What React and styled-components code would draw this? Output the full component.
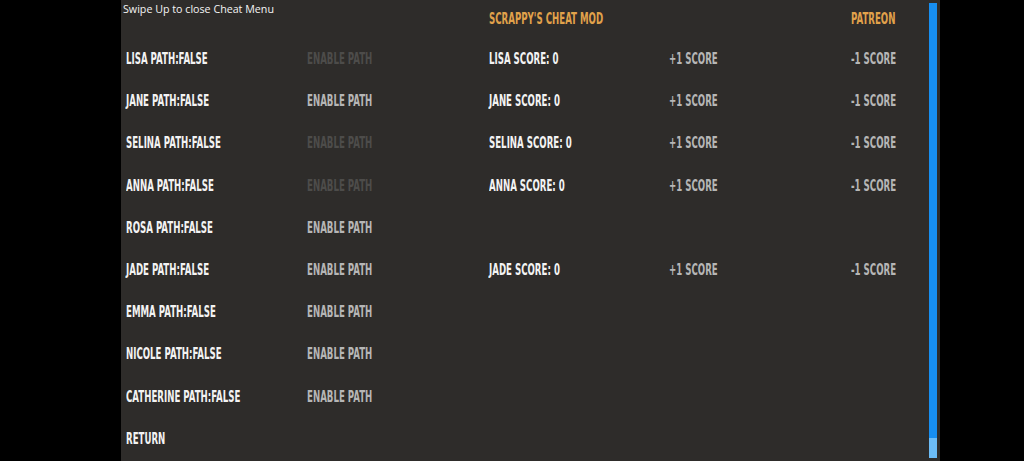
import React from "react";
import styled, { createGlobalStyle } from "styled-components";

const Global = createGlobalStyle`
  html, body { margin: 0; padding: 0; background: #000; }
  body { width: 1024px; height: 461px; overflow: hidden; }
`;

const Screen = styled.div`
  width: 1024px;
  height: 461px;
  background: #000;
  display: flex;
`;

const Panel = styled.div`
  margin-left: 121px;
  width: 819px;
  height: 461px;
  background: #2e2c2a;
  display: flex;
`;

const Content = styled.div`
  flex: 1;
  padding-left: 5px;
  display: grid;
  grid-template-columns: 181px 182px 180px 182px 1fr;
  grid-template-rows: 38px repeat(10, 42.2px);
  align-items: center;
  font-family: "DejaVu Sans Condensed", "DejaVu Sans", sans-serif;
  font-stretch: condensed;
  font-weight: 700;
  text-transform: uppercase;
  font-size: 16px;
  line-height: 1;
`;

const Notice = styled.div`
  grid-column: 1 / 3;
  align-self: start;
  margin: 3px 0 0 -3px;
  font-family: "Open Sans", "DejaVu Sans", sans-serif;
  font-stretch: normal;
  text-transform: none;
  font-weight: 400;
  font-size: 10.7px;
  line-height: 1.2;
  color: #f4f4f4;
`;

const Heading = styled.div`
  grid-column: ${(p) => p.$col};
  color: #e1a24b;
  white-space: nowrap;
`;

const Cell = styled.div`
  grid-column: ${(p) => p.$col};
  grid-row: ${(p) => p.$row};
  color: ${(p) =>
    p.$tone === "label" ? "#f3f3f3" : p.$tone === "off" ? "#4d4c4a" : "#b6b6b6"};
  white-space: nowrap;
`;

const Squeeze = styled.span`
  display: inline-block;
  transform: scaleX(0.6);
  transform-origin: left center;
`;

const ScrollTrack = styled.div`
  width: 8px;
  margin: 3px 3px 3px 0;
  display: flex;
  flex-direction: column;
`;

const ScrollThumb = styled.div`
  flex: 1;
  background: #178ef0;
`;

const ScrollEnd = styled.div`
  height: 20px;
  background: #6cbcf6;
`;

const paths = [
  ["Lisa", true],
  ["Jane", false],
  ["Selina", true],
  ["Anna", true],
  ["Rosa", false],
  ["Jade", false],
  ["Emma", false],
  ["Nicole", false],
  ["Catherine", false],
];

const scores = [
  ["Lisa", 2],
  ["Jane", 3],
  ["Selina", 4],
  ["Anna", 5],
  ["Jade", 7],
];

export default function App() {
  return (
    <>
      <Global />
      <Screen>
        <Panel>
          <Content>
            <Notice>Swipe Up to close Cheat Menu</Notice>
            <Heading $col={3}>
              <Squeeze>scrappy's Cheat Mod</Squeeze>
            </Heading>
            <Heading $col={5}>
              <Squeeze>Patreon</Squeeze>
            </Heading>
            {paths.map(([name, off], i) => (
              <React.Fragment key={name}>
                <Cell $col={1} $row={i + 2} $tone="label">
                  <Squeeze>{name} Path:False</Squeeze>
                </Cell>
                <Cell $col={2} $row={i + 2} $tone={off ? "off" : "btn"}>
                  <Squeeze>Enable Path</Squeeze>
                </Cell>
              </React.Fragment>
            ))}
            <Cell $col={1} $row={11} $tone="label">
              <Squeeze>Return</Squeeze>
            </Cell>
            {scores.map(([name, row]) => (
              <React.Fragment key={name}>
                <Cell $col={3} $row={row} $tone="label">
                  <Squeeze>{name} Score: 0</Squeeze>
                </Cell>
                <Cell $col={4} $row={row} $tone="btn">
                  <Squeeze>+1 Score</Squeeze>
                </Cell>
                <Cell $col={5} $row={row} $tone="btn">
                  <Squeeze>-1 Score</Squeeze>
                </Cell>
              </React.Fragment>
            ))}
          </Content>
          <ScrollTrack>
            <ScrollThumb />
            <ScrollEnd />
          </ScrollTrack>
        </Panel>
      </Screen>
    </>
  );
}
